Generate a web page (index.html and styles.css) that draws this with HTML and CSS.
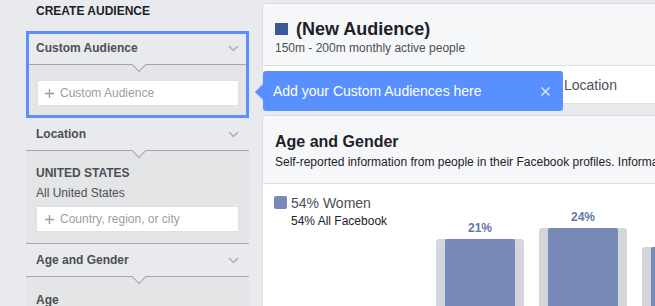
FILE: index.html
```html
<!DOCTYPE html>
<html lang="en">
<head>
  <meta charset="UTF-8">
  <title>Create Audience</title>
  <meta name="viewport" content="width=device-width, initial-scale=1.0">
  <link rel="stylesheet" href="styles.css">
</head>
<body>
  <div class="page">
    <div class="sidebar">
      <h3 class="sidebar-title">CREATE AUDIENCE</h3>

      <div class="section active">
        <div class="section-head">
          <span>Custom Audience</span>
          <svg class="chevron" width="11" height="7" viewBox="0 0 11 7"><polyline points="1,1 5.5,5.5 10,1" fill="none" stroke="#a9adb4" stroke-width="1.5"/></svg>
        </div>
        <div class="section-body">
          <div class="field">
            <svg class="plus" width="9" height="9" viewBox="0 0 9 9"><path d="M4.5 0v9M0 4.5h9" stroke="#9a9da4" stroke-width="1.4"/></svg>
            <span>Custom Audience</span>
          </div>
        </div>
      </div>

      <div class="section">
        <div class="section-head">
          <span>Location</span>
          <svg class="chevron" width="11" height="7" viewBox="0 0 11 7"><polyline points="1,1 5.5,5.5 10,1" fill="none" stroke="#a9adb4" stroke-width="1.5"/></svg>
        </div>
        <div class="section-body bordered">
          <div class="label">UNITED STATES</div>
          <div class="value">All United States</div>
          <div class="field">
            <svg class="plus" width="9" height="9" viewBox="0 0 9 9"><path d="M4.5 0v9M0 4.5h9" stroke="#9a9da4" stroke-width="1.4"/></svg>
            <span>Country, region, or city</span>
          </div>
        </div>
      </div>

      <div class="section">
        <div class="section-head">
          <span>Age and Gender</span>
          <svg class="chevron" width="11" height="7" viewBox="0 0 11 7"><polyline points="1,1 5.5,5.5 10,1" fill="none" stroke="#a9adb4" stroke-width="1.5"/></svg>
        </div>
        <div class="section-body age">
          <div class="label">Age</div>
        </div>
      </div>
    </div>

    <div class="main">
      <div class="card">
        <div class="card-head">
          <h2 class="audience-title"><span class="swatch"></span>(New Audience)</h2>
          <div class="audience-sub">150m - 200m monthly active people</div>
        </div>
        <div class="tabs">
          <span class="tab">Location</span>
        </div>
      </div>

      <div class="card">
        <div class="card-head">
          <h3 class="card-title">Age and Gender</h3>
          <div class="card-sub">Self-reported information from people in their Facebook profiles. Information only available for people in the United States.</div>
        </div>
        <div class="chart-area">
          <div class="legend">
            <div class="legend-main"><span class="legend-dot"></span>54% Women</div>
            <div class="legend-sub">54% All Facebook</div>
          </div>
          <div class="chart">
            <div class="bar-group">
              <div class="bar-label">21%</div>
              <div class="bar-back" style="height: 101px"><div class="bar-front"></div></div>
            </div>
            <div class="bar-group">
              <div class="bar-label">24%</div>
              <div class="bar-back" style="height: 112px"><div class="bar-front"></div></div>
            </div>
            <div class="bar-group">
              <div class="bar-back" style="height: 93px"><div class="bar-front"></div></div>
            </div>
          </div>
        </div>
      </div>

      <div class="tooltip">
        <span>Add your Custom Audiences here</span>
        <svg class="close" width="9" height="9" viewBox="0 0 9 9"><path d="M0.5 0.5l8 8M8.5 0.5l-8 8" stroke="#dbe5fb" stroke-width="1.5"/></svg>
      </div>
    </div>
  </div>
</body>
</html>
```

FILE: styles.css
```css
html, body {
  margin: 0;
  overflow: hidden;
}

body {
  background: #e9eaed;
  font-family: 'Liberation Sans', Arial, sans-serif;
  font-size: 12px;
  line-height: 16px;
  color: #1d2129;
}

.page {
  display: flex;
  align-items: flex-start;
}

/* sidebar */

.sidebar {
  flex: none;
  width: 223px;
  margin-left: 26px;
  padding-top: 3px;
}

.sidebar-title {
  margin: 0 0 12px 10px;
  font-size: 12px;
  line-height: 16px;
  font-weight: bold;
}

.section-head {
  position: relative;
  display: flex;
  justify-content: space-between;
  align-items: center;
  padding: 8px 10px;
  border-bottom: 1px solid #a3a6ad;
  font-weight: bold;
  color: #4b4f56;
}

.section-head::after {
  content: '';
  position: absolute;
  left: 50%;
  bottom: -6px;
  width: 10px;
  height: 10px;
  margin-left: -4px;
  box-sizing: border-box;
  background: #e9eaed;
  border-right: 1px solid #a3a6ad;
  border-bottom: 1px solid #a3a6ad;
  transform: rotate(45deg);
}

.chevron {
  display: block;
}

.section-body {
  background: #e4e5e7;
  padding: 14px 10px 11px;
}

.section-body.bordered {
  border-bottom: 1px solid #a3a6ad;
}

.section-body.age {
  padding-top: 15px;
  height: 40px;
}

.section.active {
  border: 3px solid #5890ff;
}

.section.active .section-head {
  padding: 6px 7px 8px;
}

.section.active .section-body {
  padding: 15px 7px 9px 8px;
}

.label {
  font-weight: bold;
  color: #4b4f56;
}

.value {
  margin-top: 4px;
  color: #4b4f56;
}

.field {
  display: flex;
  align-items: center;
  height: 26px;
  margin-top: 5px;
  padding-left: 8px;
  box-sizing: border-box;
  background: #fff;
  border: 1px solid #e0e1e4;
  color: #9a9da4;
}

.section.active .field {
  margin-top: 0;
  padding-left: 7px;
}

.plus {
  margin-right: 6px;
}

/* main column */

.main {
  position: relative;
  flex: none;
  width: 720px;
  margin-left: 13px;
  padding-top: 3px;
}

.card {
  background: #fff;
  border: 1px solid #dddfe2;
  border-radius: 3px;
  margin-bottom: 11px;
  overflow: hidden;
}

.card-head {
  background: #f6f7f9;
  border-bottom: 1px solid #dddfe2;
  padding: 14px 12px 9px;
}

.audience-title {
  display: flex;
  align-items: center;
  margin: 0;
  font-size: 18px;
  line-height: 22px;
  font-weight: bold;
}

.swatch {
  width: 13px;
  height: 12px;
  margin-right: 8px;
  background: #3b5998;
}

.audience-sub {
  color: #4b4f56;
}

.tabs {
  display: flex;
  padding: 10px 0 9px 301px;
}

.tab {
  font-size: 14px;
  line-height: 18px;
  color: #4b4f56;
}

.card-title {
  margin: 2px 0 0;
  font-size: 16px;
  line-height: 20px;
  font-weight: bold;
}

.card-sub {
  margin-top: 2px;
  white-space: nowrap;
  padding-bottom: 4px;
}

.chart-area {
  display: flex;
  height: 156px;
  padding-top: 10px;
  box-sizing: border-box;
}

.legend {
  flex: none;
  width: 162px;
  padding-left: 11px;
}

.legend-main {
  display: flex;
  align-items: flex-start;
  font-size: 14px;
  line-height: 18px;
  color: #4b4f56;
}

.legend-dot {
  width: 13px;
  height: 13px;
  margin: 2px 4px 0 0;
  border-radius: 2px;
  background: #7789b6;
}

.legend-sub {
  margin-top: 1px;
  padding-left: 17px;
}

.chart {
  display: flex;
  align-items: flex-end;
  gap: 15px;
}

.bar-group {
  display: flex;
  flex-direction: column;
  align-items: center;
  width: 88px;
}

.bar-label {
  margin-bottom: 3px;
  font-weight: bold;
  color: #6178ad;
}

.bar-back {
  width: 88px;
  background: #d3d6db;
  border-radius: 3px 3px 0 0;
  display: flex;
  justify-content: center;
}

.bar-front {
  width: 70px;
  background: #7789b6;
  border-radius: 2px 2px 0 0;
}

/* tooltip */

.tooltip {
  position: absolute;
  left: 1px;
  top: 71px;
  width: 300px;
  height: 40px;
  box-sizing: border-box;
  display: flex;
  justify-content: space-between;
  align-items: center;
  padding: 0 13px 0 10px;
  background: #5890ff;
  border-radius: 3px;
  color: #fff;
  font-size: 14px;
  line-height: 18px;
}

.tooltip::before {
  content: '';
  position: absolute;
  left: -8px;
  top: 13px;
  border-style: solid;
  border-width: 8px 8px 8px 0;
  border-color: transparent #5890ff transparent transparent;
}
```
